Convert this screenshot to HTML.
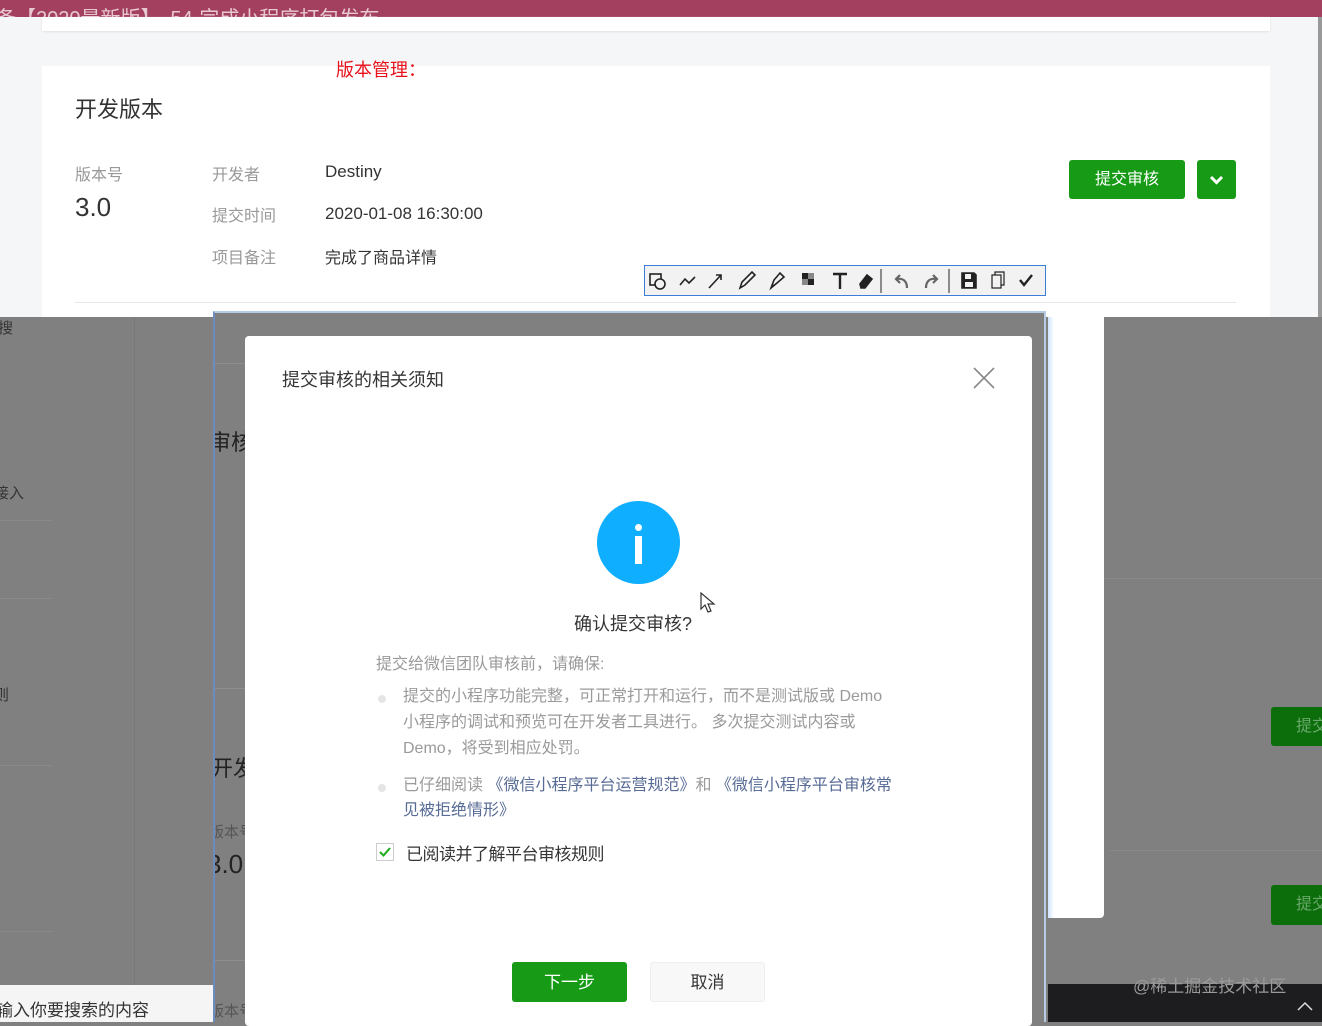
<!DOCTYPE html>
<html><head><meta charset="utf-8"><style>
*{margin:0;padding:0;box-sizing:border-box}
body{width:1322px;height:1022px;overflow:hidden;position:relative;background:#808080;font-family:"Liberation Sans","Noto Sans CJK SC",sans-serif;color:#353535}
.a{position:absolute}
.t{position:absolute;white-space:nowrap}
</style></head><body>
<div class="a" style="left:0;top:0;width:1322px;height:317px;background:#f5f6f7"></div>
<div class="a" style="left:0;top:0;width:1322px;height:17px;background:#a3405f;overflow:hidden"><div class="t" style="left:-4px;top:2px;font-size:20px;color:#e8c8d2">备【2020最新版】　54-完成小程序打包发布</div></div>
<div class="a" style="left:1318px;top:17px;width:4px;height:300px;background:#999"></div>
<div class="a" style="left:42px;top:17px;width:1228px;height:14px;background:#fff;box-shadow:0 1px 2px #e2e2e2"></div>
<div class="a" style="left:42px;top:66px;width:1228px;height:251px;background:#fff"></div>
<div class="t" style="left:336px;top:56px;font-size:18px;color:#e8121b">版本管理：</div>
<div class="t" style="left:75px;top:92px;font-size:22px;color:#333">开发版本</div>
<div class="t" style="left:75px;top:161px;font-size:16px;color:#999">版本号</div>
<div class="t" style="left:75px;top:192px;font-size:26px;color:#333">3.0</div>
<div class="t" style="left:212px;top:161px;font-size:16px;color:#999">开发者</div>
<div class="t" style="left:212px;top:202px;font-size:16px;color:#999">提交时间</div>
<div class="t" style="left:212px;top:244px;font-size:16px;color:#999">项目备注</div>
<div class="t" style="left:325px;top:162px;font-size:17px;color:#333">Destiny</div>
<div class="t" style="left:325px;top:204px;font-size:17px;color:#333">2020-01-08 16:30:00</div>
<div class="t" style="left:325px;top:244px;font-size:16px;color:#333">完成了商品详情</div>
<div class="a" style="left:75px;top:302px;width:1161px;height:1px;background:#e7e7e7"></div>
<div class="a" style="left:1069px;top:160px;width:116px;height:39px;background:#179b16;border-radius:3px;color:#fff;font-size:16px;text-align:center;line-height:39px">提交审核</div>
<div class="a" style="left:1197px;top:160px;width:39px;height:39px;background:#179b16;border-radius:3px"><svg width="39" height="39"><path d="M14 17l5.5 5.5L25 17" stroke="#fff" stroke-width="3" fill="none"/></svg></div>
<div class="a" style="left:644px;top:265px;width:402px;height:31px;background:#f2f2f2;border:1px solid #3a7fd5">
<svg width="400" height="29" fill="none" stroke="#222" stroke-width="1.6">
<rect x="5" y="8" width="11" height="11"/><circle cx="15" cy="18" r="5" fill="#f2f2f2"/>
<path d="M35 19l5-6 4 4 6-6"/>
<path d="M64 22l12-13M71 9h5v5"/>
<path d="M95 22l2-6 10-10 3 3-10 10z"/>
<path d="M126 22l3-8 6-7 4 4-7 6z M126 22l3-3" />
<g stroke="none"><rect x="157" y="7" width="6" height="6" fill="#222"/><rect x="163" y="13" width="6" height="6" fill="#222"/><rect x="163" y="7" width="6" height="6" fill="#888"/><rect x="157" y="13" width="6" height="6" fill="#888"/></g>
<path d="M188 8h14M195 8v15" stroke-width="2.4"/>
<path d="M215 18l7-9 5 4-7 9h-4z" fill="#222"/>
<line x1="236" y1="3" x2="236" y2="27" stroke-width="1"/>
<path d="M262 22c0-7-4-10-10-9M255 9l-4 4 4 4" stroke="#666" stroke-width="2.2"/>
<path d="M281 22c0-7 4-10 10-9M288 9l4 4-4 4" stroke="#666" stroke-width="2.2"/>
<line x1="304" y1="3" x2="304" y2="27" stroke-width="1"/>
<path d="M317 7h12l2 2v13h-14z" fill="#222"/><rect x="320" y="8" width="6" height="5" fill="#f2f2f2" stroke="none"/><rect x="320" y="16" width="8" height="5" fill="#f2f2f2" stroke="none"/>
<rect x="347" y="9" width="9" height="13" stroke-width="1.2"/><path d="M350 9V6h9v13h-3" stroke-width="1.2"/>
<path d="M375 14l4 5 8-10" stroke-width="2.4"/>
</svg></div>
<div class="a" style="left:134px;top:317px;width:1px;height:668px;background:#787878"></div>
<div class="t" style="left:-2px;top:317px;font-size:15px;color:#333">搜</div>
<div class="t" style="left:-6px;top:482px;font-size:15px;color:#333">接入</div>
<div class="t" style="left:-6px;top:684px;font-size:15px;color:#333">则</div>
<div class="a" style="left:0;top:520px;width:52px;height:1px;background:#8a8a8a"></div>
<div class="a" style="left:0;top:598px;width:52px;height:1px;background:#8a8a8a"></div>
<div class="a" style="left:0;top:765px;width:52px;height:1px;background:#8a8a8a"></div>
<div class="a" style="left:0;top:931px;width:52px;height:1px;background:#8a8a8a"></div>
<div class="a" style="left:0;top:985px;width:213px;height:37px;background:#f5f5f5"></div>
<div class="t" style="left:-4px;top:996px;font-size:17px;color:#333">输入你要搜索的内容</div>
<div class="a" style="left:213px;top:311px;width:833px;height:711px;background:#808080;border-left:2px solid #6a8cc0;border-top:2px solid #b6cbe6;border-right:2px solid #b6cbe6"></div>
<div class="a" style="left:215px;top:363px;width:30px;height:1px;background:#8d8d8d"></div>
<div class="a" style="left:215px;top:688px;width:30px;height:1px;background:#8d8d8d"></div>
<div class="a" style="left:215px;top:960px;width:30px;height:1px;background:#8d8d8d"></div>
<div class="a" style="left:215px;top:313px;width:30px;height:709px;overflow:hidden">
<div class="t" style="left:-6px;top:112px;font-size:22px;color:#222">审核</div>
<div class="t" style="left:-4px;top:438px;font-size:22px;color:#222">开发</div>
<div class="t" style="left:-6px;top:508px;font-size:15px;color:#555">版本号</div>
<div class="t" style="left:-8px;top:536px;font-size:26px;color:#222">3.0</div>
<div class="t" style="left:-6px;top:687px;font-size:15px;color:#555">版本号</div>
</div>
<div class="a" style="left:245px;top:336px;width:787px;height:690px;background:#fff;border-radius:4px"></div>
<div class="t" style="left:282px;top:366px;font-size:18px;color:#353535">提交审核的相关须知</div>
<svg class="a" style="left:972px;top:366px" width="24" height="24"><path d="M2 2l20 20M22 2L2 22" stroke="#888" stroke-width="1.6"/></svg>
<div class="a" style="left:597px;top:501px;width:83px;height:83px;border-radius:50%;background:#10aeff"></div>
<div class="a" style="left:635px;top:524px;width:7px;height:7px;border-radius:50%;background:#fff"></div>
<div class="a" style="left:635px;top:536px;width:7px;height:28px;background:#fff"></div>
<svg class="a" style="left:700px;top:592px" width="16" height="22"><path d="M1 1v16l4-4 3 7 3-1-3-7h6z" fill="#fff" stroke="#333" stroke-width="1.2"/></svg>
<div class="t" style="left:574px;top:610px;font-size:18px;color:#353535">确认提交审核?</div>
<div class="t" style="left:376px;top:650px;font-size:16px;color:#9a9a9a">提交给微信团队审核前，请确保:</div>
<div class="a" style="left:378px;top:695px;width:8px;height:8px;border-radius:50%;background:#e5e5e5"></div>
<div class="a" style="left:403px;top:684px;width:500px;font-size:16px;line-height:26px;color:#9a9a9a">提交的小程序功能完整，可正常打开和运行，而不是测试版或 Demo<br>小程序的调试和预览可在开发者工具进行。 多次提交测试内容或<br>Demo，将受到相应处罚。</div>
<div class="a" style="left:378px;top:784px;width:8px;height:8px;border-radius:50%;background:#e5e5e5"></div>
<div class="a" style="left:403px;top:773px;width:500px;font-size:16px;line-height:25px;color:#9a9a9a">已仔细阅读 <span style="color:#576b95">《微信小程序平台运营规范》</span>和 <span style="color:#576b95">《微信小程序平台审核常<br>见被拒绝情形》</span></div>
<div class="a" style="left:376px;top:843px;width:18px;height:18px;border:1px solid #ccc;background:#fff"><svg width="16" height="16"><path d="M3 8l3.5 3.5L13 4" stroke="#1aad19" stroke-width="2" fill="none"/></svg></div>
<div class="t" style="left:406px;top:840px;font-size:17px;color:#353535;letter-spacing:-0.5px">已阅读并了解平台审核规则</div>
<div class="a" style="left:512px;top:962px;width:115px;height:40px;background:#179b16;border-radius:3px;color:#fff;font-size:17px;text-align:center;line-height:42px">下一步</div>
<div class="a" style="left:650px;top:962px;width:115px;height:40px;background:#f8f8f8;border:1px solid #eee;border-radius:3px;color:#353535;font-size:17px;text-align:center;line-height:40px">取消</div>
<div class="a" style="left:1048px;top:317px;width:56px;height:601px;background:linear-gradient(90deg,#cfe3ff 0,#fff 6px);border-radius:0 0 4px 0"></div>
<div class="a" style="left:1104px;top:578px;width:218px;height:1px;background:#8a8a8a"></div>
<div class="a" style="left:1110px;top:850px;width:212px;height:1px;background:#8a8a8a"></div>
<div class="a" style="left:1271px;top:707px;width:60px;height:39px;background:#0b6e0b;border-radius:3px;color:#6aa86a;font-size:16px;line-height:39px;padding-left:25px;white-space:nowrap;overflow:hidden">提交</div>
<div class="a" style="left:1271px;top:885px;width:60px;height:40px;background:#0b6e0b;border-radius:3px;color:#6aa86a;font-size:16px;line-height:40px;padding-left:25px;white-space:nowrap;overflow:hidden">提交</div>
<div class="a" style="left:1048px;top:984px;width:274px;height:38px;background:#1d1d1f"></div>
<div class="t" style="left:1133px;top:972px;font-size:17px;color:#9a9a9a">@稀土掘金技术社区</div>
<svg class="a" style="left:1296px;top:1000px" width="18" height="12"><path d="M2 10l7-7 7 7" stroke="#ddd" stroke-width="1.5" fill="none"/></svg>
</body></html>
